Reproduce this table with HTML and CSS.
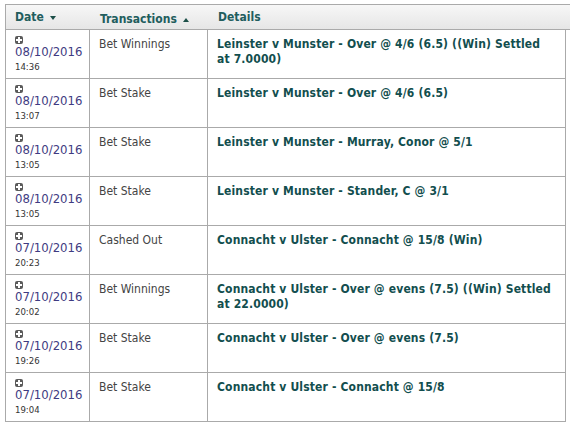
FILE: index.html
```html
<!DOCTYPE html>
<html>
<head>
<meta charset="utf-8">
<link rel="stylesheet" href="styles.css">
</head>
<body>
<div class="wrap">
  <div class="head">
    <div class="hc c1">Date <span class="arr down"></span></div>
    <div class="hc c2">Transactions <span class="arr up"></span></div>
    <div class="hc c3">Details</div>
  </div>
  <div class="body">
    <div class="row">
      <div class="cell c1"><span class="plus"></span><div class="date">08/10/2016</div><div class="time">14:36</div></div>
      <div class="cell c2">Bet Winnings</div>
      <div class="cell c3 det">Leinster v Munster - Over @ 4/6 (6.5) ((Win) Settled at 7.0000)</div>
    </div>
    <div class="row">
      <div class="cell c1"><span class="plus"></span><div class="date">08/10/2016</div><div class="time">13:07</div></div>
      <div class="cell c2">Bet Stake</div>
      <div class="cell c3 det">Leinster v Munster - Over @ 4/6 (6.5)</div>
    </div>
    <div class="row">
      <div class="cell c1"><span class="plus"></span><div class="date">08/10/2016</div><div class="time">13:05</div></div>
      <div class="cell c2">Bet Stake</div>
      <div class="cell c3 det">Leinster v Munster - Murray, Conor @ 5/1</div>
    </div>
    <div class="row">
      <div class="cell c1"><span class="plus"></span><div class="date">08/10/2016</div><div class="time">13:05</div></div>
      <div class="cell c2">Bet Stake</div>
      <div class="cell c3 det">Leinster v Munster - Stander, C @ 3/1</div>
    </div>
    <div class="row">
      <div class="cell c1"><span class="plus"></span><div class="date">07/10/2016</div><div class="time">20:23</div></div>
      <div class="cell c2">Cashed Out</div>
      <div class="cell c3 det">Connacht v Ulster - Connacht @ 15/8 (Win)</div>
    </div>
    <div class="row">
      <div class="cell c1"><span class="plus"></span><div class="date">07/10/2016</div><div class="time">20:02</div></div>
      <div class="cell c2">Bet Winnings</div>
      <div class="cell c3 det">Connacht v Ulster - Over @ evens (7.5) ((Win) Settled at 22.0000)</div>
    </div>
    <div class="row">
      <div class="cell c1"><span class="plus"></span><div class="date">07/10/2016</div><div class="time">19:26</div></div>
      <div class="cell c2">Bet Stake</div>
      <div class="cell c3 det">Connacht v Ulster - Over @ evens (7.5)</div>
    </div>
    <div class="row">
      <div class="cell c1"><span class="plus"></span><div class="date">07/10/2016</div><div class="time">19:04</div></div>
      <div class="cell c2">Bet Stake</div>
      <div class="cell c3 det">Connacht v Ulster - Connacht @ 15/8</div>
    </div>
  </div>
</div>
</body>
</html>
```
FILE: styles.css
```css
html, body {
  margin: 0;
  padding: 0;
  background: #fff;
  overflow: hidden;
}
body {
  font-family: "DejaVu Sans Condensed", "DejaVu Sans", sans-serif;
  font-stretch: condensed;
  font-size: 12px;
  color: #444;
}
.wrap {
  padding: 4px 0 0 5px;
  width: 565px;
}
.head {
  display: grid;
  grid-template-columns: 85px 118px 362px;
  height: 24px;
  border-top: 1px solid #aaa;
  border-bottom: 1px solid #aaa;
  border-left: 1px solid #aaa;
  background: linear-gradient(#f7f7f7, #e6e6e6);
}
.hc {
  line-height: 24px;
  padding-left: 9px;
  font-weight: bold;
  color: #215d5d;
  white-space: nowrap;
}
.arr {
  display: inline-block;
  width: 0;
  height: 0;
  border-left: 3px solid transparent;
  border-right: 3px solid transparent;
  vertical-align: middle;
  margin-left: 2px;
}
.arr.down {
  border-top: 4px solid #1c4f48;
}
.arr.up {
  border-bottom: 4px solid #1c4f48;
}
.body {
  width: 559px;
  border-left: 1px solid #aaa;
  border-right: 1px solid #aaa;
}
.row {
  display: grid;
  grid-template-columns: 84px 118px 357px;
  height: 48px;
  border-bottom: 1px solid #aaa;
}
.cell {
  padding: 6px 9px 0 9px;
  border-right: 1px solid #aaa;
}
.cell.c3 {
  border-right: none;
  padding-right: 10px;
}
.c2 {
  padding-top: 7px;
  line-height: 14px;
}
.det {
  padding-top: 7px;
  line-height: 15px;
  font-weight: bold;
  letter-spacing: 0.15px;
  color: #124e4e;
}
.plus {
  display: block;
  width: 8px;
  height: 8px;
  border-radius: 2px;
  background: #5a5a5a;
  position: relative;
}
.plus::before, .plus::after {
  content: "";
  position: absolute;
  background: #fff;
}
.plus::before {
  left: 1px;
  top: 3px;
  width: 6px;
  height: 2px;
}
.plus::after {
  left: 3px;
  top: 1px;
  width: 2px;
  height: 6px;
}
.date {
  font-size: 13px;
  line-height: 16px;
  color: #3f3b82;
}
.time {
  font-size: 9.5px;
  line-height: 14px;
  color: #333;
}
```
